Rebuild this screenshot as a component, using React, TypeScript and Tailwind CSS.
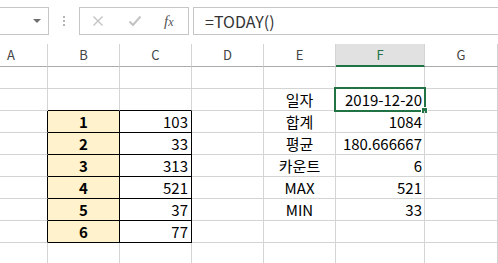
const font = "font-['Noto_Sans_CJK_KR','Noto_Sans',sans-serif]";

const cols = [
  { key: "A", w: "w-[73px]" },
  { key: "B", w: "w-[72px]" },
  { key: "C", w: "w-[72px]" },
  { key: "D", w: "w-[72px]" },
  { key: "E", w: "w-[72px]" },
  { key: "F", w: "w-[89px]" },
  { key: "G", w: "w-[73px]" },
  { key: "H", w: "w-[60px]" },
];

type Row = { b?: string; c?: string; e?: string; f?: string };

const rows: Row[] = [
  {},
  { e: "일자", f: "2019-12-20" },
  { b: "1", c: "103", e: "합계", f: "1084" },
  { b: "2", c: "33", e: "평균", f: "180.666667" },
  { b: "3", c: "313", e: "카운트", f: "6" },
  { b: "4", c: "521", e: "MAX", f: "521" },
  { b: "5", c: "37", e: "MIN", f: "33" },
  { b: "6", c: "77" },
  {},
];

function FormulaBar() {
  return (
    <div className="h-[44px] pt-[7px] flex items-start">
      <div className="w-[49px] h-[28px] border border-l-0 border-[#c6c6c6] flex items-center justify-end pr-[7px]">
        <div className="w-0 h-0 border-l-[4px] border-r-[4px] border-t-[4px] border-l-transparent border-r-transparent border-t-[#6f6f6f]" />
      </div>
      <div className="w-[30px] h-[28px] flex flex-col items-center justify-center gap-[2px]">
        <div className="w-[2px] h-[2px] bg-[#b4b4b4]" />
        <div className="w-[2px] h-[2px] bg-[#b4b4b4]" />
        <div className="w-[2px] h-[2px] bg-[#b4b4b4]" />
      </div>
      <div className="w-[110px] h-[28px] border border-[#c6c6c6] flex items-center">
        <svg width="12" height="12" viewBox="0 0 12 12" className="ml-[12px]">
          <path d="M1.5 1.5 L10.5 10.5 M10.5 1.5 L1.5 10.5" stroke="#c3c3c3" strokeWidth="1.4" fill="none" />
        </svg>
        <svg width="14" height="12" viewBox="0 0 14 12" className="ml-[24px]">
          <path d="M1.5 6.5 L5 10 L12.5 1.5" stroke="#c3c3c3" strokeWidth="2" fill="none" />
        </svg>
        <span className="ml-[22px] font-['Liberation_Serif',serif] italic text-[15px] text-[#555] leading-none">
          f<span className="text-[12px]">x</span>
        </span>
      </div>
      <div className="ml-[4px] flex-1 h-[28px] border border-r-0 border-[#c6c6c6] flex items-center pl-[11px]">
        <span className="text-[16px] text-[#333] leading-none">=TODAY()</span>
      </div>
    </div>
  );
}

function cellBorder(ri: number, ci: number) {
  const inTable = ri >= 2 && ri <= 7;
  const rightBlack = inTable && ci <= 2;
  const bottomBlack = (ci === 1 || ci === 2) && ri >= 1 && ri <= 7;
  return [
    "border-r border-b",
    rightBlack ? "border-r-black" : "border-r-[#d4d4d4]",
    bottomBlack ? "border-b-black" : "border-b-[#d4d4d4]",
  ].join(" ");
}

export default function App() {
  return (
    <div className={`w-[498px] h-[263px] overflow-hidden bg-white ${font}`}>
      <FormulaBar />
      <div className="ml-[-25px] w-[600px]">
        <div className="flex h-[23px]">
          {cols.map((c) =>
            c.key === "F" ? (
              <div
                key={c.key}
                className={`${c.w} shrink-0 h-full bg-[#e1e1e1] border-r border-r-[#d4d4d4] border-b-2 border-b-[#217346] flex items-center justify-center text-[13px] text-[#217346]`}
              >
                {c.key}
              </div>
            ) : (
              <div
                key={c.key}
                className={`${c.w} shrink-0 h-full border-r border-r-[#d4d4d4] border-b border-b-[#ababab] flex items-center justify-center text-[13px] text-[#444]`}
              >
                {c.key === "H" ? "" : c.key}
              </div>
            )
          )}
        </div>
        {rows.map((r, ri) => (
          <div key={ri} className="flex h-[22px]">
            {cols.map((c, ci) => {
              const base = `${c.w} shrink-0 h-full ${cellBorder(ri, ci)} text-[15px] leading-[21px] text-black`;
              if (c.key === "B" && r.b)
                return (
                  <div key={c.key} className={`${base} bg-[#fff2cc] font-bold text-center`}>
                    {r.b}
                  </div>
                );
              if (c.key === "C" && r.c)
                return (
                  <div key={c.key} className={`${base} text-right pr-[3px]`}>
                    {r.c}
                  </div>
                );
              if (c.key === "E" && r.e)
                return (
                  <div key={c.key} className={`${base} text-center`}>
                    {r.e}
                  </div>
                );
              if (c.key === "F" && r.f)
                return (
                  <div key={c.key} className={`${base} text-right pr-[2px] relative`}>
                    {r.f}
                    {ri === 1 && (
                      <>
                        <div className="absolute left-[-2px] top-[-2px] w-[92px] h-[25px] border-2 border-[#217346]" />
                        <div className="absolute left-[85px] top-[18px] w-[7px] h-[7px] bg-[#217346] border border-white" />
                      </>
                    )}
                  </div>
                );
              return <div key={c.key} className={base} />;
            })}
          </div>
        ))}
      </div>
    </div>
  );
}
